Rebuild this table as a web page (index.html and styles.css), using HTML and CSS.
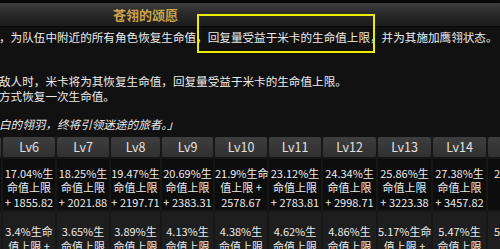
FILE: index.html
```html
<!DOCTYPE html>
<html lang="zh">
<head>
<meta charset="utf-8">
<link rel="stylesheet" href="styles.css">
</head>
<body>
<div class="page">
  <div class="topstrip"></div>
  <div class="titlebar"><span class="title">苍翎的颂愿</span></div>
  <div class="desc">
    <p class="line">，为队伍中附近的所有角色恢复生命值，回复量受益于米卡的生命值上限，并为其施加鹰翎状态。</p>
    <p class="line gap-big">敌人时，米卡将为其恢复生命值，回复量受益于米卡的生命值上限。</p>
    <p class="line">方式恢复一次生命值。</p>
    <p class="line gap-small quote">白的翎羽，终将引领迷途的旅者。」</p>
  </div>
  <div class="levels">
    <div class="hd"></div><div class="hd">Lv6</div><div class="hd">Lv7</div><div class="hd">Lv8</div><div class="hd">Lv9</div><div class="hd">Lv10</div><div class="hd">Lv11</div><div class="hd">Lv12</div><div class="hd">Lv13</div><div class="hd">Lv14</div><div class="hd"></div>

    <div class="c r1"></div>
    <div class="c r1">17.04%生<br>命值上限<br>+ 1855.82</div>
    <div class="c r1">18.25%生<br>命值上限<br>+ 2021.88</div>
    <div class="c r1">19.47%生<br>命值上限<br>+ 2197.71</div>
    <div class="c r1">20.69%生<br>命值上限<br>+ 2383.31</div>
    <div class="c r1">21.9%生命<br>值上限 +<br>2578.67</div>
    <div class="c r1">23.12%生<br>命值上限<br>+ 2783.81</div>
    <div class="c r1">24.34%生<br>命值上限<br>+ 2998.71</div>
    <div class="c r1">25.86%生<br>命值上限<br>+ 3223.38</div>
    <div class="c r1">27.38%生<br>命值上限<br>+ 3457.82</div>
    <div class="c r1">2</div>

    <div class="c r2"></div>
    <div class="c r2">3.4%生命<br>值上限 +<br>370.98</div>
    <div class="c r2">3.65%生<br>命值上限<br>+ 404.08</div>
    <div class="c r2">3.89%生<br>命值上限<br>+ 439.14</div>
    <div class="c r2">4.13%生<br>命值上限<br>+ 476.15</div>
    <div class="c r2">4.38%生<br>命值上限<br>+ 515.1</div>
    <div class="c r2">4.62%生<br>命值上限<br>+ 556.01</div>
    <div class="c r2">4.86%生<br>命值上限<br>+ 598.86</div>
    <div class="c r2">5.17%生命<br>值上限 +<br>643.66</div>
    <div class="c r2">5.47%生<br>命值上限<br>+ 690.41</div>
    <div class="c r2">5</div>
  </div>
  <div class="highlight"></div>
</div>
</body>
</html>
```

FILE: styles.css
```css
html, body {
  margin: 0;
  padding: 0;
  background: #111111;
  overflow: hidden;
}
.page {
  position: relative;
  width: 500px;
  height: 249px;
  overflow: hidden;
  font-family: "Noto Sans CJK SC", "Noto Sans", sans-serif;
  color: #e8e8e8;
}
.topstrip {
  height: 3px;
  background: #070707;
}
.titlebar {
  height: 24px;
  display: flex;
  align-items: center;
  padding-left: 113px;
  background: linear-gradient(to bottom, #3d3d3d 0%, #2a2a2a 45%, #1b1b1b 100%);
  border-bottom: 1px solid #0a0a0a;
  box-sizing: border-box;
}
.title {
  font-size: 13px;
  font-weight: 700;
  color: #cfa64c;
  line-height: 1;
  margin-top: -1px;
}
.desc {
  padding-top: 2.5px;
  margin-left: -1px;
}
.line {
  margin: 0;
  font-size: 11.6px;
  line-height: 15px;
  white-space: nowrap;
  color: #ececec;
}
.gap-big {
  margin-top: 29.5px;
}
.gap-small {
  margin-top: 12.5px;
}
.quote {
  font-style: italic;
}
.levels {
  display: grid;
  grid-template-columns: 52px 52px 52px 49px 51px 52px 52px 53px 53px 53px 53px;
  grid-template-rows: 20px auto auto;
  gap: 2px;
  margin-top: 5px;
  margin-left: -51px;
  width: max-content;
  background: #171717;
}
.hd {
  display: flex;
  align-items: center;
  justify-content: center;
  background: linear-gradient(to bottom, #3e3e3e, #303030);
  border-radius: 2px;
  font-size: 12.5px;
  color: #e2e2e2;
}
.c {
  text-align: left;
  padding-left: 6px;
  font-size: 11px;
  line-height: 14.5px;
  white-space: nowrap;
  color: #ececec;
}
.r1 {
  background: #0d0d0d;
  padding-top: 7px;
  padding-bottom: 1px;
}
.r2 {
  background: #1e1e1e;
  padding-top: 12px;
  padding-bottom: 2px;
}
.r1, .r2 {
  text-align: center;
  padding-left: 0;
}
.r1:last-child, .r2:last-child {
  text-align: left;
  padding-left: 6px;
}
.levels > .r1:nth-child(22) {
  text-align: left;
  padding-left: 6px;
}
.highlight {
  position: absolute;
  left: 197px;
  top: 14px;
  width: 178px;
  height: 39px;
  box-sizing: border-box;
  border: 2px solid #ecec00;
}
```
